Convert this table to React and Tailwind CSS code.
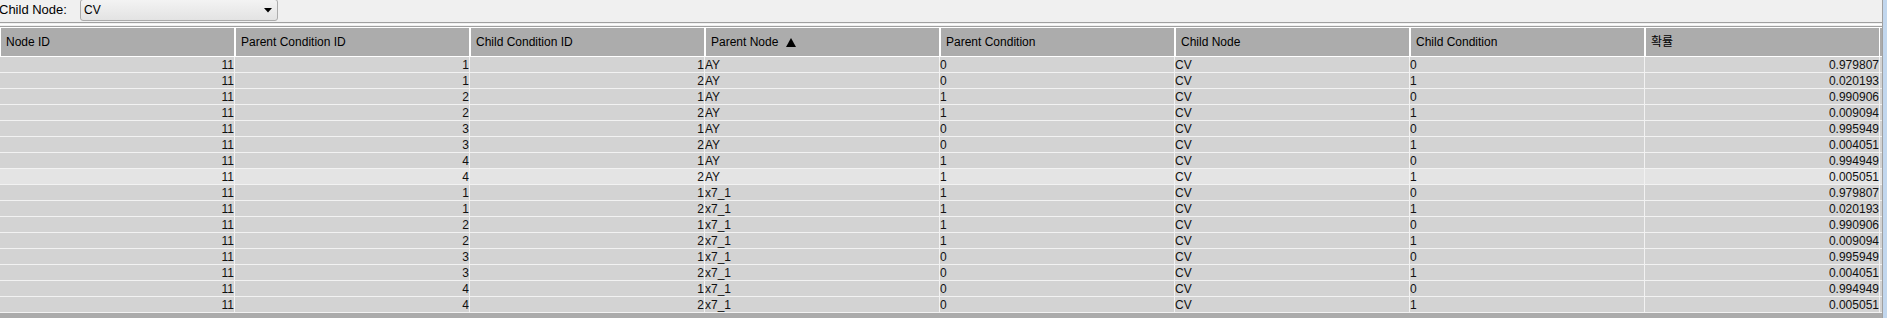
import React from 'react';

const columns = [
  { label: 'Node ID', align: 'right' },
  { label: 'Parent Condition ID', align: 'right' },
  { label: 'Child Condition ID', align: 'right' },
  { label: 'Parent Node', align: 'left', sorted: true },
  { label: 'Parent Condition', align: 'left' },
  { label: 'Child Node', align: 'left' },
  { label: 'Child Condition', align: 'left' },
  { label: '확률', align: 'right' },
];

const rows = [
  ['11', '1', '1', 'AY', '0', 'CV', '0', '0.979807'],
  ['11', '1', '2', 'AY', '0', 'CV', '1', '0.020193'],
  ['11', '2', '1', 'AY', '1', 'CV', '0', '0.990906'],
  ['11', '2', '2', 'AY', '1', 'CV', '1', '0.009094'],
  ['11', '3', '1', 'AY', '0', 'CV', '0', '0.995949'],
  ['11', '3', '2', 'AY', '0', 'CV', '1', '0.004051'],
  ['11', '4', '1', 'AY', '1', 'CV', '0', '0.994949'],
  ['11', '4', '2', 'AY', '1', 'CV', '1', '0.005051'],
  ['11', '1', '1', 'x7_1', '1', 'CV', '0', '0.979807'],
  ['11', '1', '2', 'x7_1', '1', 'CV', '1', '0.020193'],
  ['11', '2', '1', 'x7_1', '1', 'CV', '0', '0.990906'],
  ['11', '2', '2', 'x7_1', '1', 'CV', '1', '0.009094'],
  ['11', '3', '1', 'x7_1', '0', 'CV', '0', '0.995949'],
  ['11', '3', '2', 'x7_1', '0', 'CV', '1', '0.004051'],
  ['11', '4', '1', 'x7_1', '0', 'CV', '0', '0.994949'],
  ['11', '4', '2', 'x7_1', '0', 'CV', '1', '0.005051'],
];

// row that is shown lighter (rollover / lead row)
const highlightedRow = 7;

const App = () => {
  return (
    <div className="w-[1887px] h-[318px] overflow-hidden flex bg-[#f0f0f0] text-[12px] text-[#101010] font-['Liberation_Sans','Noto_Sans_CJK_KR',Arial,sans-serif]">
      <div className="w-[1883px] h-full flex flex-col border-r border-[#a0a0a0]">
        {/* Filter bar */}
        <div className="h-[22px] flex items-start shrink-0">
          <span className="w-[81px] -ml-px text-[13px] leading-[20px] text-black">Child Node:</span>
          <div className="w-[198px] h-[22px] -mt-[1px] border border-[#acacac] rounded-[3px] bg-gradient-to-b from-[#f3f3f3] to-[#e3e3e3] flex items-center justify-between pl-[3px] pr-[4px]">
            <span className="text-[12px] leading-none text-black">CV</span>
            <svg width="8" height="5" viewBox="0 0 8 5" className="mr-[1px]">
              <polygon points="0,0 8,0 4,4.5" fill="#000" />
            </svg>
          </div>
        </div>

        {/* Separator lines */}
        <div className="h-px bg-[#a0a0a0] shrink-0" />
        <div className="h-px bg-[#f0f0f0] shrink-0" />
        <div className="h-px bg-white shrink-0" />
        <div className="h-px bg-[#f0f0f0] shrink-0" />
        <div className="h-px bg-[#a0a0a0] shrink-0" />

        {/* Table */}
        <div className="flex-1 flex flex-col bg-[#ababab] overflow-hidden">
          {/* Header */}
          <div className="flex h-[30px] shrink-0 border-t border-white border-b border-[#7c7c7c] bg-[#acacac]">
            {columns.map((col) => (
              <div
                key={col.label}
                className="w-[235px] shrink-0 h-full flex items-center pl-[5px] border-l border-white border-r border-[#808080] text-black"
              >
                <span>{col.label}</span>
                {col.sorted && (
                  <svg width="10" height="9" viewBox="0 0 10 9" className="ml-[8px]">
                    <polygon points="5,0 10,9 0,9" fill="#000" />
                  </svg>
                )}
              </div>
            ))}
          </div>

          {/* Body */}
          {rows.map((row, rowIndex) => (
            <div
              key={rowIndex}
              className={`flex h-[16px] shrink-0 border-b border-[#f2f2f2] ${
                rowIndex === highlightedRow ? 'bg-[#e4e4e4]' : 'bg-[#d3d3d3]'
              }`}
            >
              {row.map((value, colIndex) => (
                <div
                  key={colIndex}
                  className={`w-[235px] shrink-0 h-full flex items-center border-r border-[#f2f2f2] leading-none ${
                    columns[colIndex].align === 'right' ? 'justify-end' : 'justify-start'
                  }`}
                >
                  {value}
                </div>
              ))}
            </div>
          ))}
        </div>
      </div>
      <div className="flex-1 bg-[#c2d7ee]" />
    </div>
  );
};

export default App;
